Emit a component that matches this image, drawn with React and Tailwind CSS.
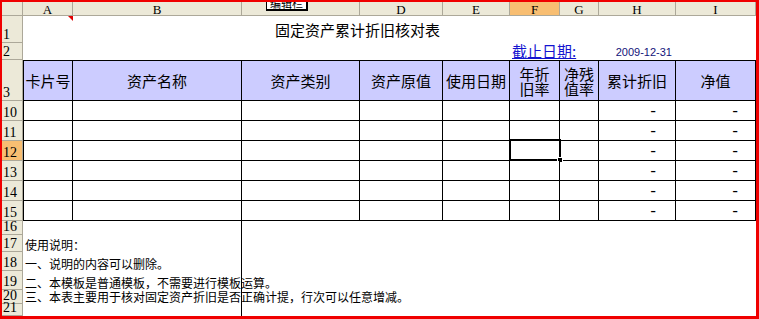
import React from "react";

const CJK = "font-['Noto_Sans_CJK_SC',sans-serif]";
const SERIF = "font-['Liberation_Serif',serif]";

function ColHead({ children, active, className = "" }) {
  return (
    <div
      className={`flex items-center justify-center border-r border-b border-[#ACA899] text-[13px] leading-none pt-[2px] ${SERIF} ${
        active ? "bg-[#F8BE72]" : "bg-[#ECE9D8]"
      } ${className}`}
    >
      {children}
    </div>
  );
}

function RowHead({ n, active }) {
  return (
    <div
      className={`flex items-end pl-[1px] border-r border-b border-[#ACA899] text-[14px] leading-[15px] text-black ${SERIF} ${
        active ? "bg-[#F8BE72]" : "bg-[#ECE9D8]"
      }`}
    >
      {n}
    </div>
  );
}

function HeadCell({ children, first, className = "" }) {
  return (
    <div
      className={`flex items-center justify-center text-center bg-[#CCCCFF] border-t border-r border-b border-black text-[15px] leading-[15px] text-black ${CJK} ${
        first ? "border-l" : ""
      } ${className}`}
    >
      {children}
    </div>
  );
}

function DataCell({ children, first, className = "" }) {
  return (
    <div
      className={`flex items-center border-r border-b border-black bg-white ${
        first ? "border-l" : ""
      } ${className}`}
    >
      {children}
    </div>
  );
}

const dataRows = [10, 11, 12, 13, 14, 15];

const notes = [
  { n: 16, text: "" },
  { n: 17, text: "使用说明：" },
  { n: 18, text: "一、说明的内容可以删除。" },
  { n: 19, text: "二、本模板是普通模板，不需要进行模板运算。" },
  { n: 20, text: "三、本表主要用于核对固定资产折旧是否正确计提，行次可以任意增减。" },
  { n: 21, text: "" },
];

export default function App() {
  return (
    <div className="w-[759px] h-[319px] bg-white border-solid border-[#F00000] border-l-2 border-t-2 border-r-[3px] border-b-[3px] overflow-hidden">
      <div className="grid grid-cols-[21px_50px_169px_118px_83px_67px_50px_39px_77px_80px] grid-rows-[14px_27px_17px_41px_20px_20px_20px_20px_20px_20px_14px_17px_19px_19px_14px_12px]">
        {/* column header row */}
        <div className="bg-[#ECE9D8] border-r border-b border-[#ACA899]" />
        <ColHead>A</ColHead>
        <ColHead>B</ColHead>
        <ColHead className="relative overflow-visible">
          <span className="invisible">C</span>
          <div className="absolute left-[24px] top-[-6px] w-[42px] h-[15px] bg-white border border-black border-r-2 border-b-2 flex items-end justify-center">
            <span className={`text-[11px] leading-[12px] text-black ${CJK}`}>编辑栏</span>
          </div>
        </ColHead>
        <ColHead>D</ColHead>
        <ColHead>E</ColHead>
        <ColHead active>F</ColHead>
        <ColHead>G</ColHead>
        <ColHead>H</ColHead>
        <ColHead>I</ColHead>

        {/* row 1 */}
        <RowHead n="1" />
        <div className="relative">
          <div className="absolute top-0 right-0 w-0 h-0 border-l-[5px] border-l-transparent border-t-[5px] border-t-[#E00000]" />
        </div>
        <div className="col-span-8 flex items-center pl-[202px]">
          <span className={`text-[15px] leading-[16px] text-black whitespace-nowrap ${CJK}`}>
            固定资产累计折旧核对表
          </span>
        </div>

        {/* row 2 */}
        <RowHead n="2" />
        <div className="col-span-5" />
        <div className="col-span-2 flex items-end pl-[2px] pb-[1px]">
          <span
            className={`text-[15px] leading-[16px] text-[#1414D0] underline underline-offset-[1px] whitespace-nowrap ${CJK}`}
          >
            截止日期:
          </span>
        </div>
        <div className="flex items-end justify-end pr-[4px] pb-[2px]">
          <span className="text-[11px] leading-[12px] text-[#12127A] font-['Liberation_Sans',sans-serif] whitespace-nowrap">
            2009-12-31
          </span>
        </div>
        <div />

        {/* row 3 header */}
        <RowHead n="3" />
        <HeadCell first>卡片号</HeadCell>
        <HeadCell>资产名称</HeadCell>
        <HeadCell>资产类别</HeadCell>
        <HeadCell>资产原值</HeadCell>
        <HeadCell>使用日期</HeadCell>
        <HeadCell>
          年折
          <br />
          旧率
        </HeadCell>
        <HeadCell>
          净残
          <br />
          值率
        </HeadCell>
        <HeadCell>累计折旧</HeadCell>
        <HeadCell>净值</HeadCell>

        {/* data rows */}
        {dataRows.map((n) => (
          <React.Fragment key={n}>
            <RowHead n={String(n)} active={n === 12} />
            <DataCell first />
            <DataCell />
            <DataCell />
            <DataCell />
            <DataCell />
            <DataCell className="relative">
              {n === 12 && (
                <>
                  <div className="absolute left-[-1px] top-[-2px] w-[52px] h-[22px] border-2 border-black" />
                  <div className="absolute left-[47px] top-[16px] w-[6px] h-[6px] bg-black border border-white" />
                </>
              )}
            </DataCell>
            <DataCell />
            <DataCell className="justify-end pr-[19px]">
              <span className="text-[16px] leading-none text-black font-['DejaVu_Sans',sans-serif]">-</span>
            </DataCell>
            <DataCell className="justify-end pr-[17px]">
              <span className="text-[16px] leading-none text-black font-['DejaVu_Sans',sans-serif]">-</span>
            </DataCell>
          </React.Fragment>
        ))}

        {/* notes rows */}
        {notes.map((r) => (
          <React.Fragment key={r.n}>
            <RowHead n={String(r.n)} />
            <div className="col-span-2 flex items-end pl-[2px] border-r border-black">
              <span className={`text-[12px] leading-[14px] text-black whitespace-nowrap ${CJK}`}>{r.text}</span>
            </div>
            <div className="col-span-7" />
          </React.Fragment>
        ))}
      </div>
    </div>
  );
}
